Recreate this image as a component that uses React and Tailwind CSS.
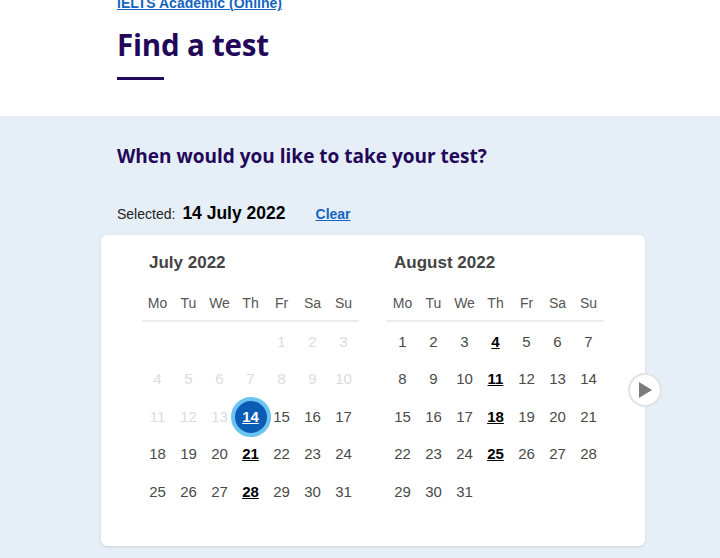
import React from "react";

const DAYS = ["Mo", "Tu", "We", "Th", "Fr", "Sa", "Su"];

// offset = blank cells before day 1 (Mon-first)
const july = { title: "July 2022", offset: 4, days: 31, disabledUntil: 13, available: [21, 28], selected: 14 };
const august = { title: "August 2022", offset: 0, days: 31, disabledUntil: 0, available: [4, 11, 18, 25], selected: null };

const DayCell = ({ day, month }) => {
  if (!day) return <div className="h-[37.5px]" />;
  const disabled = day <= month.disabledUntil;
  const selected = day === month.selected;
  const available = month.available.includes(day);

  if (selected) {
    return (
      <div className="h-[37.5px] flex items-center justify-center">
        <span className="shrink-0 w-[40px] h-[40px] rounded-full bg-[#0b5cb5] border-[4px] border-[#6cc3f0] flex items-center justify-center text-white font-bold underline text-[15px]">
          {day}
        </span>
      </div>
    );
  }

  return (
    <div
      className={
        "h-[37.5px] flex items-center justify-center text-[15px] " +
        (disabled
          ? "text-[#dcdcdc]"
          : available
          ? "text-black font-bold underline"
          : "text-[#4a4a4a]")
      }
    >
      {day}
    </div>
  );
};

const Month = ({ month }) => {
  const cells = [];
  for (let i = 0; i < month.offset; i++) cells.push(null);
  for (let d = 1; d <= month.days; d++) cells.push(d);

  return (
    <div className="w-[217px]">
      <h3 className="text-[17px] font-bold text-[#444] pl-[7px] leading-5">{month.title}</h3>
      <div className="grid grid-cols-7 mt-[20px] pb-[7px] border-b-2 border-[#ececec]">
        {DAYS.map((d) => (
          <div key={d} className="text-center text-[14px] text-[#555] leading-5">
            {d}
          </div>
        ))}
      </div>
      <div className="grid grid-cols-7 mt-[1px]">
        {cells.map((d, i) => (
          <DayCell key={i} day={d} month={month} />
        ))}
      </div>
    </div>
  );
};

const App = () => {
  return (
    <div className="min-h-screen bg-[#e6eff8] font-['Liberation_Sans',Arial,sans-serif] overflow-hidden">
      {/* Header */}
      <div className="bg-white h-[116px] px-[117px] flex flex-col items-start">
        <a className="block -mt-[5px] text-[14px] font-bold text-[#1565c0] underline leading-4">
          IELTS Academic (Online)
        </a>
        <h1 className="mt-[16px] text-[29.5px] font-bold text-[#23085a] font-['Open_Sans',sans-serif] leading-9 tracking-[-0.2px]">
          Find a test
        </h1>
        <div className="mt-[14px] w-[47px] h-[3px] bg-[#23085a]" />
      </div>

      {/* Date picker section */}
      <div className="pt-[28px]">
        <h2 className="pl-[117px] text-[19px] font-bold text-[#23085a] font-['Open_Sans',sans-serif] leading-6">
          When would you like to take your test?
        </h2>

        <div className="pl-[117px] mt-[32px] flex items-baseline">
          <span className="text-[14px] text-[#222]">Selected:</span>
          <span className="ml-[7px] text-[17.5px] font-bold text-black">14 July 2022</span>
          <a className="ml-[30px] text-[14px] font-bold text-[#1565c0] underline">Clear</a>
        </div>

        <div className="ml-[101px] mt-[9px] w-[544px] bg-white rounded-md shadow-sm relative px-[41px] pt-[18px] pb-[35px] flex gap-[28px]">
          <Month month={july} />
          <Month month={august} />

          <button className="absolute right-[-17px] top-[138px] w-[34px] h-[34px] rounded-full bg-white border-2 border-[#e2e2e2] flex items-center justify-center">
            <svg width="16" height="18" viewBox="0 0 16 18">
              <path d="M2 1 L15 9 L2 17 Z" fill="#7b7b7b" />
            </svg>
          </button>
        </div>
      </div>
    </div>
  );
};

export default App;
